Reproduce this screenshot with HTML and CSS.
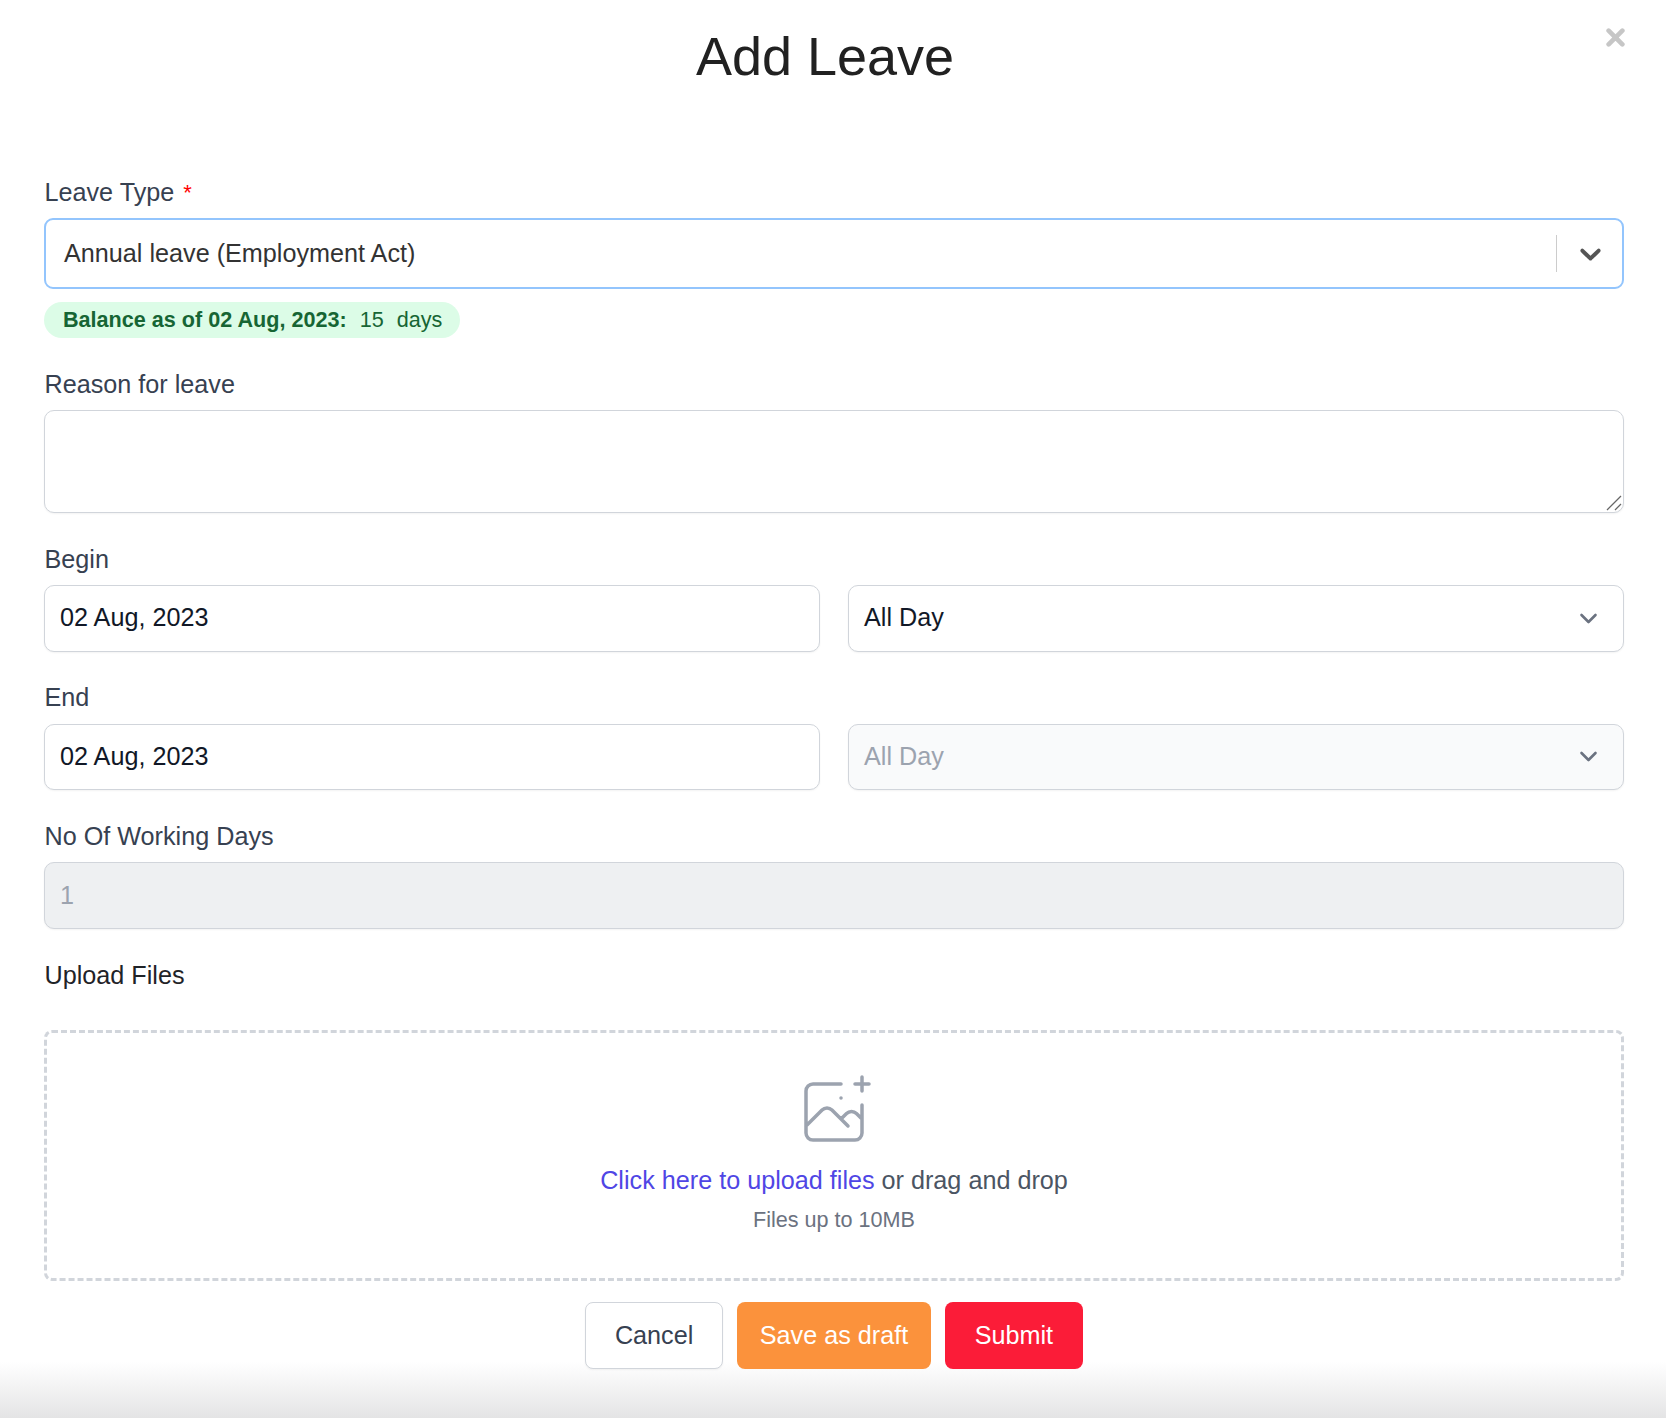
FILE: index.html
```html
<!DOCTYPE html>
<html lang="en">
<head>
<meta charset="utf-8">
<title>Add Leave</title>
<link rel="stylesheet" href="styles.css">
</head>
<body>
<main class="modal">
  <header class="modal-header">
    <h1 class="modal-title">Add Leave</h1>
    <button class="close" type="button" aria-label="Close">
      <svg width="19" height="19" viewBox="0 0 18 18"><path d="M2.5 2.5l13 13M15.5 2.5l-13 13" fill="none" stroke="#c6c6c6" stroke-width="4.4" stroke-linecap="round"/></svg>
    </button>
  </header>
  <form class="form">
    <div class="field field-first">
      <div class="label label-first">Leave Type <span class="req">*</span></div>
      <div class="combo">
        <span class="combo-value">Annual leave (Employment Act)</span>
        <span class="combo-sep"></span>
        <svg class="combo-arrow" width="35" height="35" viewBox="0 0 20 20"><path fill="#555" d="M4.516 7.548c0.436-0.446 1.043-0.481 1.576 0l3.908 3.747 3.908-3.747c0.533-0.481 1.141-0.446 1.574 0 0.436 0.445 0.408 1.197 0 1.615-0.406 0.418-4.695 4.502-4.695 4.502-0.217 0.223-0.502 0.335-0.787 0.335s-0.57-0.112-0.789-0.335c0 0-4.287-4.084-4.695-4.502s-0.436-1.17 0-1.615z"/></svg>
      </div>
      <div class="balance"><b>Balance as of 02 Aug, 2023:</b><span class="balance-num">15</span><span class="balance-unit">days</span></div>
    </div>
    <div class="field">
      <div class="label">Reason for leave</div>
      <div class="textarea-wrap">
        <textarea class="textarea" aria-label="Reason for leave"></textarea>
        <svg class="grip" width="16" height="16" viewBox="0 0 16 16"><path d="M1 15L15 1M9 15l6-6" fill="none" stroke="#666" stroke-width="1.3"/></svg>
      </div>
    </div>
    <div class="field">
      <div class="label">Begin</div>
      <div class="row">
        <div class="box">02 Aug, 2023</div>
        <div class="box box-select">All Day
          <svg class="chev" width="35" height="35" viewBox="0 0 20 20"><path d="M6 8l4 4 4-4" fill="none" stroke="#6b7280" stroke-width="1.5" stroke-linecap="round" stroke-linejoin="round"/></svg>
        </div>
      </div>
    </div>
    <div class="field field-end">
      <div class="label label-end">End</div>
      <div class="row">
        <div class="box box-short">02 Aug, 2023</div>
        <div class="box box-short box-select box-muted">All Day
          <svg class="chev" width="35" height="35" viewBox="0 0 20 20"><path d="M6 8l4 4 4-4" fill="none" stroke="#6b7280" stroke-width="1.5" stroke-linecap="round" stroke-linejoin="round"/></svg>
        </div>
      </div>
    </div>
    <div class="field">
      <div class="label">No Of Working Days</div>
      <div class="box box-disabled">1</div>
    </div>
    <div class="field">
      <div class="label label-dark label-upload">Upload Files</div>
      <div class="drop">
        <svg class="drop-icon" width="84" height="84" viewBox="0 0 48 48" fill="none" stroke="#9ca3af" stroke-width="2" stroke-linecap="round" stroke-linejoin="round"><path d="M28 8H12a4 4 0 00-4 4v20m32-12v8m0 0v8a4 4 0 01-4 4H12a4 4 0 01-4-4v-4m32-4l-3.172-3.172a4 4 0 00-5.656 0L28 28M8 32l9.172-9.172a4 4 0 015.656 0L28 28m0 0l4 4m4-24h8m-4-4v8m-12 4h.02"/></svg>
        <p class="drop-text"><span class="drop-link">Click here to upload files</span> or drag and drop</p>
        <p class="drop-hint">Files up to 10MB</p>
      </div>
    </div>
    <div class="actions">
      <button class="btn btn-cancel" type="button">Cancel</button>
      <button class="btn btn-draft" type="button">Save as draft</button>
      <button class="btn btn-submit" type="button">Submit</button>
    </div>
  </form>
</main>
</body>
</html>
```
FILE: styles.css
```css
* { box-sizing: border-box; }
html, body { margin: 0; height: 1418px; overflow: hidden; }
body {
  font-family: "Liberation Sans", Arial, sans-serif;
  font-size: 25.2px;
  color: #374151;
  background: linear-gradient(to bottom, #ffffff 0, #ffffff 1362px, #e4e4e5 1418px);
}
.modal { position: relative; padding: 0 42px 0 44px; }
.modal-header { height: 177px; display: flex; justify-content: center; padding: 21px 18px 0 0; }
.modal-title { margin: 0; font-size: 54px; font-weight: 400; line-height: 70px; color: #212121; }
.close { position: absolute; top: 28px; right: 41px; padding: 0; border: 0; background: none; line-height: 0; }
.field { margin-top: 32px; }
.field-first { margin-top: 0; }
.field-end { margin-top: 31px; }
.label { height: 30px; line-height: 29px; margin-bottom: 10px; padding-left: 0.5px; color: #374151; }
.label-first { line-height: 30px; }
.label-end { margin-bottom: 11px; }
.label-dark { color: #1f2328; }
.label-upload { margin-bottom: 39px; }
.req { color: #f00; font-size: 22px; vertical-align: 1px; margin-left: 2px; }
.combo {
  display: flex; align-items: center; height: 71px; margin-top: 11px;
  padding: 0 14px 0 18px; border: 2.5px solid #93c5fd; border-radius: 9px;
  color: #333;
}
.combo-value { flex: 1; }
.combo-sep { width: 1.5px; height: 37px; background: #ccc; margin-right: 16px; }
.combo-arrow { display: block; }
.balance {
  display: inline-flex; align-items: center; height: 36px; margin-top: 13px; padding: 0 18px 0 19px;
  border-radius: 18px; background: #dcfce7; color: #166534; font-size: 21.6px;
}
.balance b { font-weight: 700; }
.balance-num { margin-left: 13px; }
.balance-unit { margin-left: 13px; }
.textarea-wrap { position: relative; line-height: 0; }
.textarea {
  display: block; width: 100%; height: 103px; padding: 14px; resize: none;
  border: 1.5px solid #d1d5db; border-radius: 10px; font: inherit; background: #fff;
  box-shadow: 0 1px 2px rgba(0,0,0,.05);
}
.grip { position: absolute; right: 2px; bottom: 2px; }
.row { display: grid; grid-template-columns: 1fr 1fr; gap: 28px; }
.box {
  position: relative; display: flex; align-items: center; height: 67px; padding: 0 15px 2px;
  border: 1.5px solid #d1d5db; border-radius: 10px; color: #111827; background: #fff;
  box-shadow: 0 1px 2px rgba(0,0,0,.05);
}
.box-short { height: 66px; }
.box-muted { background: #f9fafb; color: #9ca3af; }
.box-disabled { background: #eef0f2; color: #9ca3af; padding-bottom: 0; }
.chev { position: absolute; right: 17px; top: 50%; margin-top: -18px; }
.drop {
  display: flex; flex-direction: column; align-items: center; height: 251px; padding-top: 37px;
  border: 3px dashed #d1d5db; border-radius: 8px; background: #fff;
}
.drop-icon { display: block; }
.drop-text { margin: 9px 0 0; line-height: 35px; color: #4b5563; }
.drop-link { color: #4f46e5; }
.drop-hint { margin: 6px 0 0; font-size: 21.6px; line-height: 32px; color: #6b7280; }
.actions { display: flex; justify-content: center; gap: 14px; margin-top: 21px; }
.btn {
  height: 67px; padding: 0 28.5px; border: 1.5px solid transparent; border-radius: 8px;
  font: inherit; color: #fff;
}
.btn-cancel { background: #fff; border-color: #d1d5db; color: #374151; box-shadow: 0 1px 2px rgba(0,0,0,.05); }
.btn-draft { background: #fb923c; padding: 0 22px; }
.btn-submit { background: #fb1c38; }
```
